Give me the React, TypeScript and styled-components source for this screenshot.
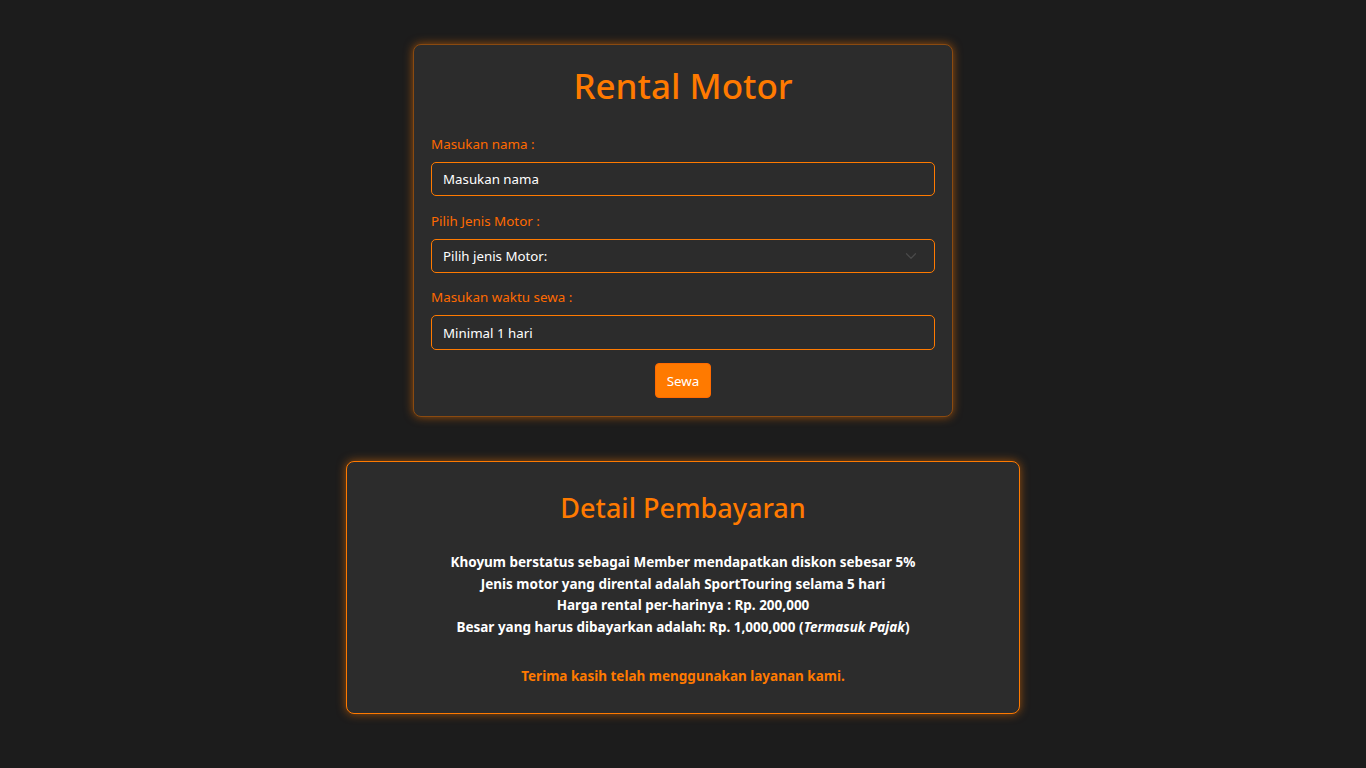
import React from "react";
import styled, { createGlobalStyle } from "styled-components";

const Global = createGlobalStyle`
  html, body { margin: 0; padding: 0; background: #1c1c1c; }
  body { font-family: "Segoe UI", "Noto Sans", sans-serif; color: #fff; }
  * { box-sizing: border-box; }
`;

const Page = styled.div`
  display: flex;
  flex-direction: column;
  align-items: center;
  padding-top: 44px;
  gap: 44px;
  min-height: 768px;
`;

const Card = styled.div<{ $w: number; $bright?: boolean }>`
  width: ${(p) => p.$w}px;
  background: #2c2c2c;
  border: 1px solid ${(p) => (p.$bright ? "#ff7a00" : "#8a4a10")};
  border-radius: 8px;
  box-shadow: 0 0 10px rgba(255, 122, 0, 0.55);
`;

const FormCard = styled(Card)`
  padding: 18px 17px 18px;
  display: flex;
  flex-direction: column;
`;

const Title = styled.h1`
  margin: 1px 0 26px;
  font-size: 35px;
  line-height: 44px;
  font-weight: 500;
  color: #ff7a00;
  text-align: center;
`;

const Label = styled.label`
  display: block;
  font-size: 13.4px;
  line-height: 20px;
  color: #ff6a00;
  margin-bottom: 8px;
`;

const Field = styled.div<{ $mb?: number }>`
  margin-bottom: ${(p) => p.$mb ?? 15}px;
`;

const Input = styled.input<{ $h?: number }>`
  width: 100%;
  height: ${(p) => p.$h ?? 34}px;
  background: #2c2c2c;
  border: 1px solid #ff7a00;
  border-radius: 5px;
  padding: 0 11px;
  font-family: inherit;
  font-size: 13.3px;
  color: #fff;
  outline: none;
  &::placeholder { color: #fff; opacity: 1; }
`;

const SelectBox = styled.div`
  width: 100%;
  height: 34px;
  border: 1px solid #ff7a00;
  border-radius: 5px;
  padding: 0 11px;
  display: flex;
  align-items: center;
  justify-content: space-between;
  font-size: 13.3px;
  color: #fff;
`;

const Chevron = styled.svg`
  width: 12px;
  height: 12px;
  margin-right: 6px;
`;

const ButtonRow = styled.div`
  display: flex;
  justify-content: center;
  margin-top: -2px;
`;

const Button = styled.button`
  height: 35px;
  width: 56px;
  background: #ff7a00;
  border: 1px solid #ff6a00;
  border-radius: 4px;
  color: #fff;
  font-family: inherit;
  font-size: 13.4px;
  cursor: pointer;
`;

const DetailCard = styled(Card)`
  padding: 24px 20px 25px;
  text-align: center;
`;

const SubTitle = styled.h2`
  margin: 0 0 22px;
  font-size: 27px;
  line-height: 44px;
  font-weight: 500;
  color: #ff7a00;
`;

const Info = styled.p`
  margin: 0;
  font-size: 13.5px;
  line-height: 21.6px;
  font-weight: 700;
  color: #fff;
`;

const Thanks = styled(Info)`
  margin-top: 28px;
  color: #ff7a00;
`;

export default function App() {
  return (
    <>
      <Global />
      <Page>
        <FormCard $w={540}>
          <Title>Rental Motor</Title>
          <Label>Masukan nama :</Label>
          <Field>
            <Input placeholder="Masukan nama" />
          </Field>
          <Label>Pilih Jenis Motor :</Label>
          <Field $mb={14}>
            <SelectBox>
              <span>Pilih jenis Motor:</span>
              <Chevron viewBox="0 0 16 16">
                <path d="M2 5l6 6 6-6" fill="none" stroke="#4a4a4a" strokeWidth="1.6" strokeLinecap="round" strokeLinejoin="round" />
              </Chevron>
            </SelectBox>
          </Field>
          <Label>Masukan waktu sewa :</Label>
          <Field>
            <Input placeholder="Minimal 1 hari" $h={35} />
          </Field>
          <ButtonRow>
            <Button>Sewa</Button>
          </ButtonRow>
        </FormCard>
        <DetailCard $w={674} $bright>
          <SubTitle>Detail Pembayaran</SubTitle>
          <Info>Khoyum berstatus sebagai Member mendapatkan diskon sebesar 5%</Info>
          <Info>Jenis motor yang dirental adalah SportTouring selama 5 hari</Info>
          <Info>Harga rental per-harinya : Rp. 200,000</Info>
          <Info>
            Besar yang harus dibayarkan adalah: Rp. 1,000,000 (<i>Termasuk Pajak</i>)
          </Info>
          <Thanks>Terima kasih telah menggunakan layanan kami.</Thanks>
        </DetailCard>
      </Page>
    </>
  );
}
